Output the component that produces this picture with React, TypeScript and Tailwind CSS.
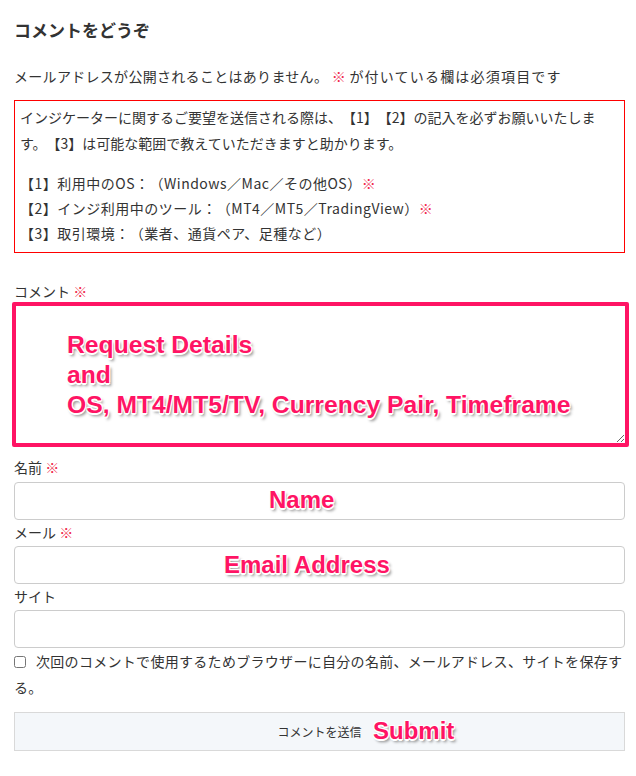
import React from 'react';

const note =
  "font-['Liberation_Sans',Arial,sans-serif] font-bold leading-[30px] text-[#ff1464] [text-shadow:-1px_-1px_0_#fff,1px_-1px_0_#fff,-1px_1px_0_#fff,1px_1px_0_#fff,0_2px_0_#fff,2px_3px_3px_rgba(0,0,0,0.45)]";

function Req() {
  return <span className="text-[#f0294a]">※</span>;
}

export default function App() {
  return (
    <div className="min-h-screen bg-white text-[#333] font-['Noto_Sans_CJK_JP','Liberation_Sans',sans-serif] text-[14px] [text-spacing-trim:space-all]">
      <div className="pl-[14px] pr-[11px] pt-[17px]">
        {/* Heading */}
        <h3 className="text-[17px] leading-[25px] font-bold">コメントをどうぞ</h3>

        <p className="mt-[22px] leading-[25px] tracking-[0.3px]">
          メールアドレスが公開されることはありません。 <Req />{' '}
          <span className="tracking-[1.2px]">が付いている欄は必須項目です</span>
        </p>

        {/* Notice box */}
        <div className="mt-[11px] border border-[#ff0000] pl-[5px] pr-[10px] pt-[3px] pb-[6px]">
          <p className="leading-[26px]">
            インジケーターに関するご要望を送信される際は、【1】【2】の記入を必ずお願いいたします。【3】は可能な範囲で教えていただきますと助かります。
          </p>
          <div className="mt-[15px] leading-[25px] tracking-[0.5px]">
            <p>【1】利用中のOS：（Windows／Mac／その他OS）<Req /></p>
            <p>【2】インジ利用中のツール：（MT4／MT5／TradingView）<Req /></p>
            <p>【3】取引環境：（業者、通貨ペア、足種など）</p>
          </div>
        </div>

        {/* Comment */}
        <label className="block mt-[27px] leading-[22px]">
          コメント <Req />
        </label>
        <div className="relative -ml-[2px] w-[617px] h-[145px]">
          <textarea className="block w-full h-full border-4 border-[#ff1464] rounded-[2px] bg-white outline-none resize-y" />
          <div className={`${note} text-[24.7px] absolute left-[55px] top-[28px] pointer-events-none`}>
            Request Details
            <br />
            and
            <br />
            OS, MT4/MT5/TV, Currency Pair, Timeframe
          </div>
        </div>

        {/* Name */}
        <label className="block mt-[9px] leading-[22px]">
          名前 <Req />
        </label>
        <div className="relative mt-[4px]">
          <input type="text" className="block w-full h-[38px] border border-[#ccc] rounded-[4px] bg-white outline-none" />
          <span className={`${note} text-[24px] absolute left-[255px] top-[3px] pointer-events-none`}>Name</span>
        </div>

        {/* Email */}
        <label className="block mt-[1px] leading-[22px]">
          メール <Req />
        </label>
        <div className="relative mt-[3px]">
          <input type="email" className="block w-full h-[38px] border border-[#ccc] rounded-[4px] bg-white outline-none" />
          <span className={`${note} text-[24px] absolute left-[210px] top-[4px] pointer-events-none`}>Email Address</span>
        </div>

        {/* Site */}
        <label className="block mt-[1px] leading-[22px]">サイト</label>
        <input type="url" className="block mt-[3px] w-full h-[38px] border border-[#ccc] rounded-[4px] bg-white outline-none" />

        {/* Cookies consent */}
        <p className="leading-[26px] tracking-[0.3px]">
          <input type="checkbox" className="w-[12px] h-[12px] m-0 mr-[10px] align-[-1px]" />
          次回のコメントで使用するためブラウザーに自分の名前、メールアドレス、サイトを保存する。
        </p>

        {/* Submit */}
        <div className="relative mt-[12px]">
          <button
            type="button"
            className="block w-full h-[39px] border border-[#d9d9d9] bg-[#f4f7fa] text-[12px] text-[#333]"
          >
            コメントを送信
          </button>
          <span className={`${note} text-[24px] absolute left-[359px] top-[4px] pointer-events-none`}>Submit</span>
        </div>
      </div>
    </div>
  );
}
